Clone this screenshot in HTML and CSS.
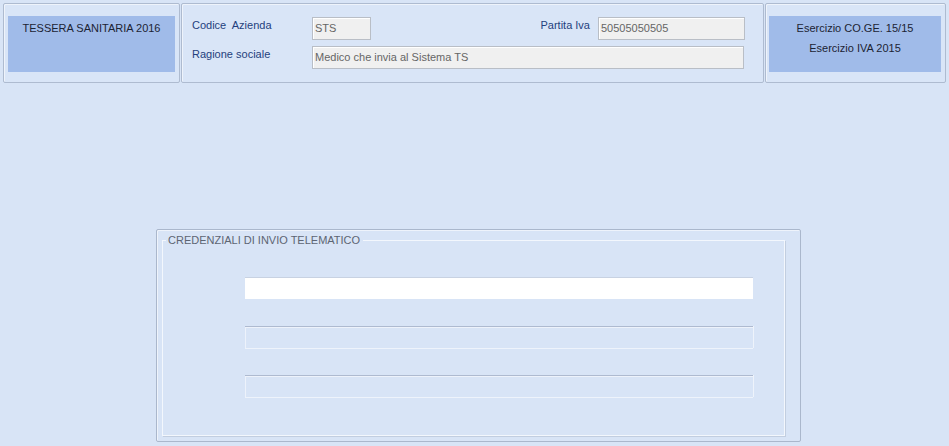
FILE: index.html
```html
<!DOCTYPE html>
<html lang="it">
<head>
    <meta charset="UTF-8">
    <title>Tessera Sanitaria</title>
    <link rel="stylesheet" href="styles.css">
</head>
<body>
    <div class="top">
        <div class="panel panel-title">
            <div class="badge">
                <p>TESSERA SANITARIA 2016</p>
            </div>
        </div>

        <div class="panel panel-company">
            <div class="row">
                <span class="label">Codice&nbsp; Azienda</span>
                <div class="field field-code">STS</div>
                <span class="label label-iva">Partita Iva</span>
                <div class="field field-iva">50505050505</div>
            </div>
            <div class="row">
                <span class="label">Ragione sociale</span>
                <div class="field field-name">Medico che invia al Sistema TS</div>
            </div>
        </div>

        <div class="panel panel-year">
            <div class="badge">
                <p>Esercizio CO.GE. 15/15</p>
                <p>Esercizio IVA 2015</p>
            </div>
        </div>
    </div>

    <div class="group">
        <fieldset class="credentials">
            <legend>CREDENZIALI DI INVIO TELEMATICO</legend>
            <input class="cred cred-active" type="text">
            <input class="cred" type="text" disabled>
            <input class="cred" type="text" disabled>
        </fieldset>
    </div>
</body>
</html>
```

FILE: styles.css
```css
* {
    box-sizing: border-box;
}

body {
    margin: 0;
    padding: 3px;
    background-color: #d8e4f6;
    font-family: "Liberation Sans", Arial, sans-serif;
    font-size: 11px;
    color: #222;
    height: 446px;
    overflow: hidden;
}

/* top bar with three panels */
.top {
    display: flex;
    gap: 1px;
    height: 80px;
}

.panel {
    border: 1px solid #aebbd0;
    border-radius: 2px;
    box-shadow: inset 1px 1px 0 #eef3fb;
    background-color: #d9e5f7;
}

.panel-title {
    width: 177px;
    padding: 12px 4px 0 4px;
}

.panel-year {
    width: 181px;
    padding: 12px 4px 0 3px;
}

.panel-company {
    width: 583px;
    padding: 13px 18px 0 10px;
}

.badge {
    background-color: #a0bbe9;
    height: 56px;
    padding-top: 6px;
    text-align: center;
    color: #1c2333;
}

.badge p {
    margin: 0 0 7px 0;
    line-height: 13px;
}

.row {
    display: flex;
    align-items: center;
    margin-bottom: 6px;
}

.label {
    color: #243f7d;
    width: 120px;
    margin-top: -8px;
}

.label-iva {
    width: auto;
    margin-left: auto;
    margin-right: 8px;
}

.field {
    height: 23px;
    padding: 3px 2px;
    background-color: #f0f0f0;
    border: 1px solid #b9bec6;
    box-shadow: inset 1px 1px 0 #fff;
    color: #666;
    line-height: 14px;
}

.field-code {
    width: 59px;
}

.field-iva {
    width: 147px;
}

.field-name {
    width: 432px;
}

/* credentials group */
.group {
    width: 645px;
    height: 213px;
    margin: 146px 0 0 153px;
    border: 1px solid #aab7cc;
    border-radius: 2px;
    box-shadow: inset 1px 1px 0 #eef3fb;
    padding: 4px 15px 5px 5px;
}

.credentials {
    height: 100%;
    margin: 0;
    padding: 0;
    border: 1px solid #f3f7fd;
    box-shadow: 1px 1px 0 #c2cee0;
}

.credentials legend {
    padding: 0 3px 0 2px;
    margin-left: 3px;
    color: #5d6573;
    font-size: 11px;
}

.cred {
    display: block;
    width: 508px;
    height: 22px;
    margin: 0 0 27px 82px;
    border: none;
    border-top: 1px solid #aebad0;
    background-color: transparent;
    box-shadow: inset 1px 1px 0 #edf2fb, 0 1px 0 #eef3fb, 1px 0 0 #eef3fb;
}

.cred-active {
    margin-top: 31px;
    background-color: #fff;
    border-top: 1px solid #c8d2e2;
    box-shadow: none;
}
```
